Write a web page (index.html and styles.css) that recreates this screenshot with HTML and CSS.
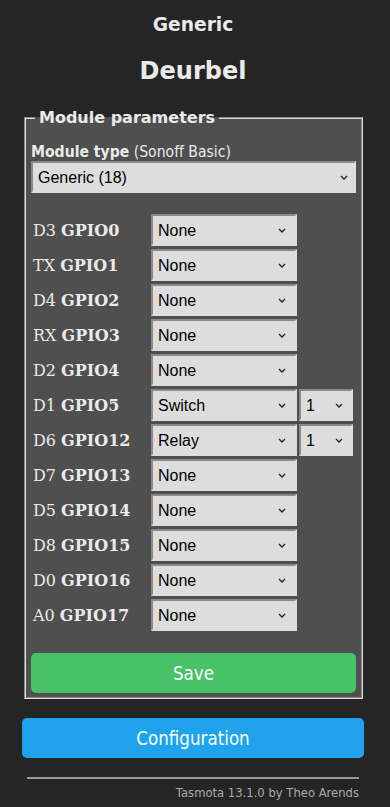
FILE: index.html
```html
<!DOCTYPE html>
<html lang="nl">
<head>
    <meta charset="UTF-8">
    <meta name="viewport" content="width=device-width, initial-scale=1.0">
    <title>Deurbel - Configure Module</title>
    <link rel="stylesheet" href="styles.css">
</head>
<body>
    <div class="page">
        <div class="header">
            <h3>Generic</h3>
            <h2>Deurbel</h2>
        </div>
        <form class="module-form">
            <fieldset>
                <legend>Module parameters</legend>
                <p class="module-type"><b>Module type</b> (Sonoff Basic)</p>
                <span class="sel wide">
                    <select><option>Sonoff Basic (1)</option><option selected>Generic (18)</option></select>
                    <svg viewBox="0 0 8 5"><path d="M1 1l3 3 3-3"/></svg>
                </span>
                <div class="gpio-list">
                    <div class="gpio-row"><span class="pin">D3 <b>GPIO0</b></span><span class="sel func"><select><option selected>None</option><option>Switch</option><option>Relay</option></select><svg viewBox="0 0 8 5"><path d="M1 1l3 3 3-3"/></svg></span></div>
                    <div class="gpio-row"><span class="pin">TX <b>GPIO1</b></span><span class="sel func"><select><option selected>None</option><option>Switch</option><option>Relay</option></select><svg viewBox="0 0 8 5"><path d="M1 1l3 3 3-3"/></svg></span></div>
                    <div class="gpio-row"><span class="pin">D4 <b>GPIO2</b></span><span class="sel func"><select><option selected>None</option><option>Switch</option><option>Relay</option></select><svg viewBox="0 0 8 5"><path d="M1 1l3 3 3-3"/></svg></span></div>
                    <div class="gpio-row"><span class="pin">RX <b>GPIO3</b></span><span class="sel func"><select><option selected>None</option><option>Switch</option><option>Relay</option></select><svg viewBox="0 0 8 5"><path d="M1 1l3 3 3-3"/></svg></span></div>
                    <div class="gpio-row"><span class="pin">D2 <b>GPIO4</b></span><span class="sel func"><select><option selected>None</option><option>Switch</option><option>Relay</option></select><svg viewBox="0 0 8 5"><path d="M1 1l3 3 3-3"/></svg></span></div>
                    <div class="gpio-row"><span class="pin">D1 <b>GPIO5</b></span><span class="sel func"><select><option>None</option><option selected>Switch</option><option>Relay</option></select><svg viewBox="0 0 8 5"><path d="M1 1l3 3 3-3"/></svg></span><span class="sel idx"><select><option selected>1</option><option>2</option></select><svg viewBox="0 0 8 5"><path d="M1 1l3 3 3-3"/></svg></span></div>
                    <div class="gpio-row"><span class="pin">D6 <b>GPIO12</b></span><span class="sel func"><select><option>None</option><option>Switch</option><option selected>Relay</option></select><svg viewBox="0 0 8 5"><path d="M1 1l3 3 3-3"/></svg></span><span class="sel idx"><select><option selected>1</option><option>2</option></select><svg viewBox="0 0 8 5"><path d="M1 1l3 3 3-3"/></svg></span></div>
                    <div class="gpio-row"><span class="pin">D7 <b>GPIO13</b></span><span class="sel func"><select><option selected>None</option><option>Switch</option><option>Relay</option></select><svg viewBox="0 0 8 5"><path d="M1 1l3 3 3-3"/></svg></span></div>
                    <div class="gpio-row"><span class="pin">D5 <b>GPIO14</b></span><span class="sel func"><select><option selected>None</option><option>Switch</option><option>Relay</option></select><svg viewBox="0 0 8 5"><path d="M1 1l3 3 3-3"/></svg></span></div>
                    <div class="gpio-row"><span class="pin">D8 <b>GPIO15</b></span><span class="sel func"><select><option selected>None</option><option>Switch</option><option>Relay</option></select><svg viewBox="0 0 8 5"><path d="M1 1l3 3 3-3"/></svg></span></div>
                    <div class="gpio-row"><span class="pin">D0 <b>GPIO16</b></span><span class="sel func"><select><option selected>None</option><option>Switch</option><option>Relay</option></select><svg viewBox="0 0 8 5"><path d="M1 1l3 3 3-3"/></svg></span></div>
                    <div class="gpio-row"><span class="pin">A0 <b>GPIO17</b></span><span class="sel func"><select><option selected>None</option><option>Switch</option><option>Relay</option></select><svg viewBox="0 0 8 5"><path d="M1 1l3 3 3-3"/></svg></span></div>
                </div>
                <button type="button" class="btn save">Save</button>
            </fieldset>
        </form>
        <button type="button" class="btn config">Configuration</button>
        <div class="footer">
            <hr>
            <span>Tasmota 13.1.0 by Theo Arends</span>
        </div>
    </div>
</body>
</html>
```

FILE: styles.css
```css
* {
    box-sizing: border-box;
}
body {
    margin: 0;
    background: #252525;
    color: #eaeaea;
    font-family: "DejaVu Sans", Verdana, sans-serif;
}
.page {
    width: 342px;
    margin-left: 22px;
}
.header {
    text-align: center;
}
.header h3 {
    margin: 14px 0 0;
    font-size: 18.7px;
    line-height: 22px;
}
.header h2 {
    margin: 21px 0 0;
    font-size: 24px;
    line-height: 28px;
}
.module-form {
    margin: 0;
}
fieldset {
    margin: 23px 1px 0 2px;
    padding: 15px 5px 4px;
    border: 2px groove #dddddd;
    background: #4f4f4f;
    min-width: 0;
}
legend {
    margin-left: 4px;
    padding: 0 4px;
    font-size: 16px;
    font-weight: bold;
    line-height: 20px;
}
.module-type {
    margin: 0;
    font-family: "DejaVu Sans Condensed", "DejaVu Sans", sans-serif;
    font-size: 15.6px;
    line-height: 18px;
}
.sel {
    position: relative;
    display: inline-block;
    height: 32px;
}
.sel select {
    width: 100%;
    height: 32px;
    padding: 0 20px 0 5px;
    font-family: "Liberation Sans", Arial, sans-serif;
    font-size: 16px;
    color: #000000;
    background: #dddddd;
    border: 2px solid;
    border-color: #8a8a8a #dddddd #dddddd #8a8a8a;
    border-radius: 0;
    appearance: none;
    -webkit-appearance: none;
}
.sel svg {
    position: absolute;
    right: 10px;
    top: 14px;
    width: 8px;
    height: 5px;
    fill: none;
    stroke: #222222;
    stroke-width: 1.3;
    pointer-events: none;
}
.wide {
    display: block;
}
.wide svg {
    right: 8px;
}
.gpio-list {
    display: flex;
    flex-direction: column;
    gap: 3px;
    margin-top: 21px;
}
.gpio-row {
    display: flex;
    align-items: center;
}
.pin {
    width: 120px;
    padding-left: 2px;
    font-family: "DejaVu Serif", Georgia, serif;
    font-size: 16px;
}
.func {
    width: 146px;
}
.func svg {
    right: 11px;
}
.idx {
    width: 54px;
    margin-left: 2px;
}
.btn {
    display: block;
    width: 100%;
    height: 40px;
    border: 0;
    border-radius: 5px;
    color: #faffff;
    font-family: "DejaVu Sans Condensed", "Liberation Sans", sans-serif;
    font-size: 18.6px;
}
.save {
    margin-top: 22px;
    background: #47c266;
}
.config {
    margin-top: 19px;
    background: #1fa3ec;
}
.footer {
    padding: 0 5px;
    text-align: right;
    font-size: 11.6px;
    line-height: 14px;
    color: #aaaaaa;
}
.footer hr {
    margin: 19px 0 7px;
    border: 0;
    border-top: 2px solid #9a9a9a;
}
```
